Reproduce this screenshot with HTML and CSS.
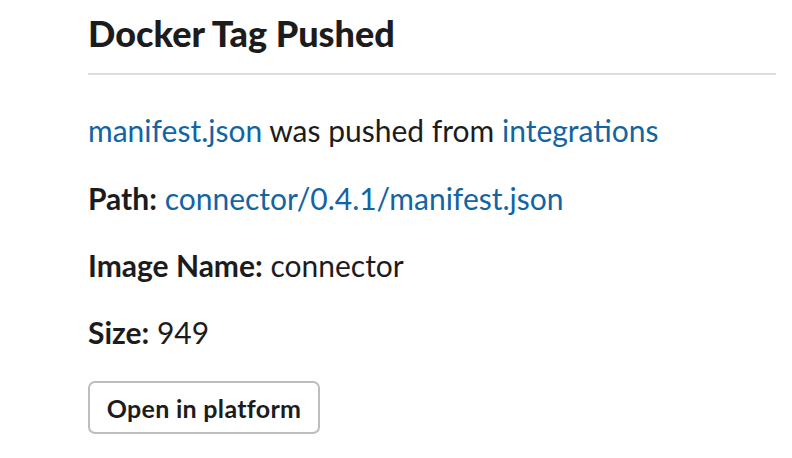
FILE: index.html
```html
<!DOCTYPE html>
<html>
<head>
<meta charset="utf-8">
<link rel="stylesheet" href="styles.css">
</head>
<body>
<div class="card">
  <h1 class="title">Docker Tag Pushed</h1>
  <div class="divider"></div>
  <p class="line first"><a class="link" href="#">manifest.json</a> was pushed from <a class="link" href="#">integrations</a></p>
  <p class="line second"><b>Path:</b> <a class="link" href="#">connector/0.4.1/manifest.json</a></p>
  <p class="line"><b>Image Name:</b> connector</p>
  <p class="line"><b>Size:</b> 949</p>
  <div class="actions"><button class="btn">Open in platform</button></div>
</div>
</body>
</html>
```
FILE: styles.css
```css
html, body { margin: 0; padding: 0; background: #fff; }
body { font-family: Lato, "Noto Sans", sans-serif; color: #1d1c1d; }
.card { padding: 12px 16px 0 88px; }
.title { margin: 0; font-size: 36px; font-weight: 900; line-height: 42px; }
.divider { height: 2px; background: #dddddd; margin-top: 19px; }
.line { margin: 0; font-size: 30px; line-height: 36px; margin-top: 31px; }
.line.first { margin-top: 37px; }
.line.second { margin-top: 32px; }
.line b { font-weight: 700; }
.link { color: #1264a3; text-decoration: none; }
.actions { margin-top: 31px; }
.btn { display: block; font-family: Lato, sans-serif; font-size: 25px; letter-spacing: 0.3px; font-weight: 700; color: #1d1c1d; background: #fff; border: 2px solid #bdbdbd; border-radius: 7px; height: 53px; width: 232px; padding: 0; }
```
